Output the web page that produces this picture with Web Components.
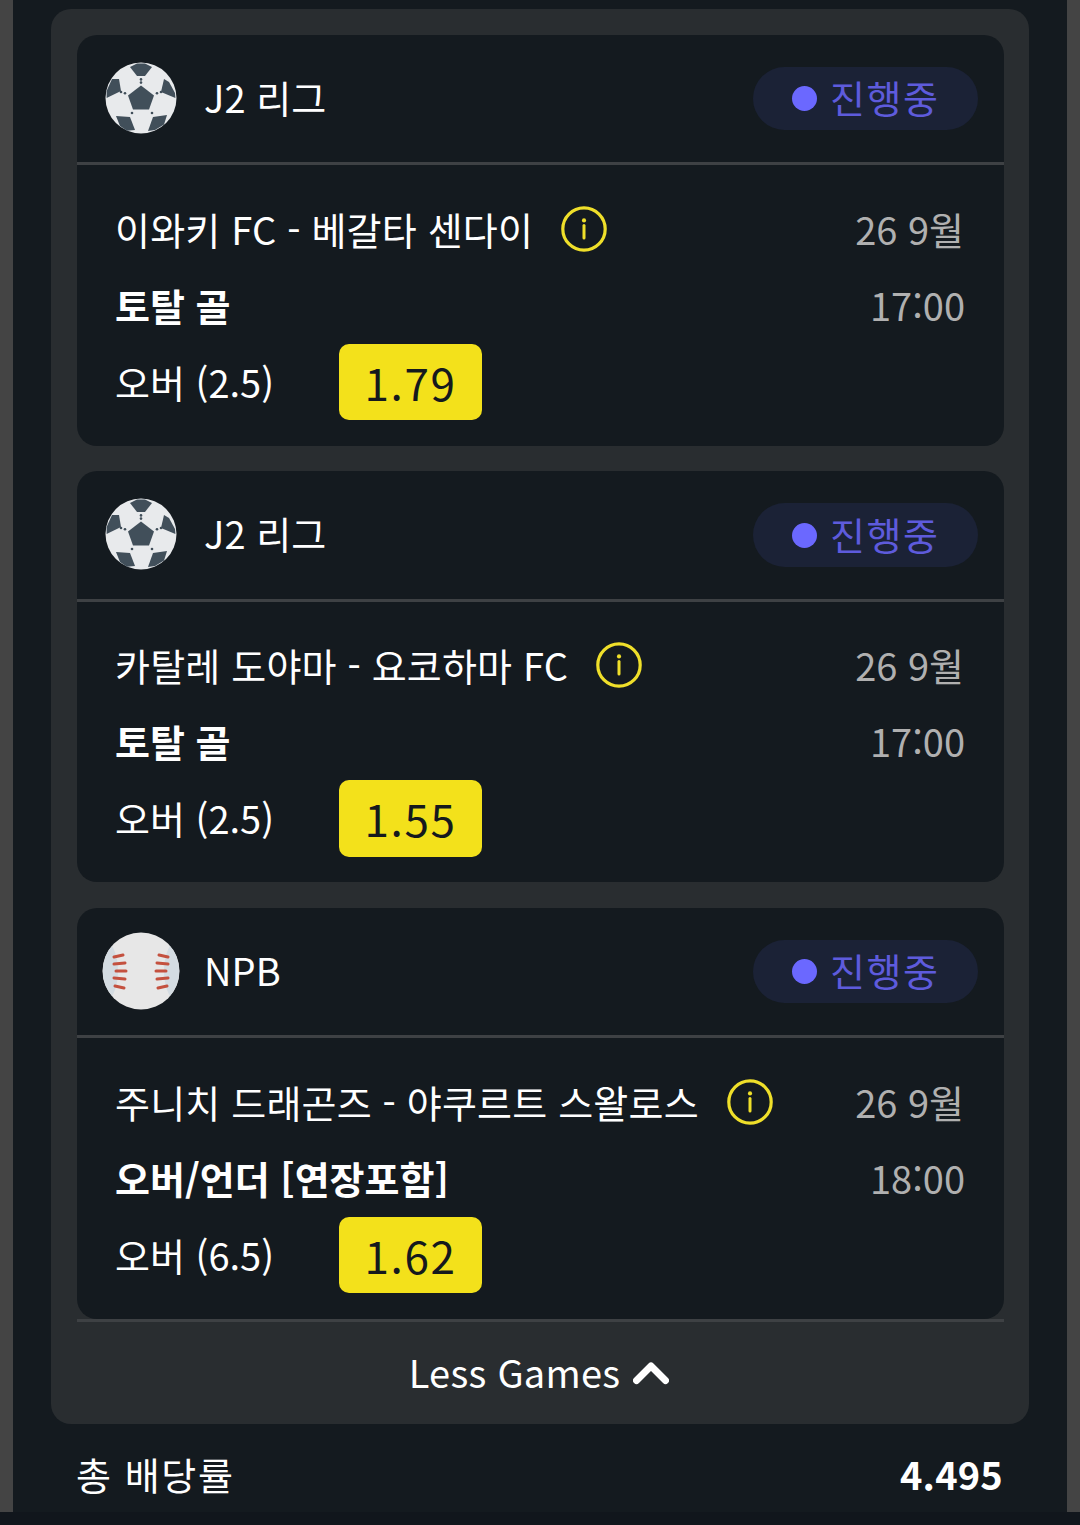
<!DOCTYPE html>
<html lang="ko"><head><meta charset="utf-8"><title>bets</title>
<style>
html,body{margin:0;padding:0;background:#11161c}
body{width:1080px;height:1525px;overflow:hidden;font-family:"Noto Sans CJK KR","Noto Sans",sans-serif;color:#fff}
</style></head><body>
<bet-slip>
  <bet-game sport="soccer" league="J2 리그" match="이와키 FC - 베갈타 센다이" market="토탈 골" pick="오버 (2.5)" odd="1.79" time="17:00"></bet-game>
  <bet-game sport="soccer" league="J2 리그" match="카탈레 도야마 - 요코하마 FC" market="토탈 골" pick="오버 (2.5)" odd="1.55" time="17:00"></bet-game>
  <bet-game sport="baseball" league="NPB" match="주니치 드래곤즈 - 야쿠르트 스왈로스" market="오버/언더 [연장포함]" pick="오버 (6.5)" odd="1.62" time="18:00"></bet-game>
</bet-slip>
<script>
const SOCCER=`<svg width="72" height="72" viewBox="-36 -36 72 72"><circle r="35.5" fill="#e8eaec"/><g fill="#414f5a"><path d="M0-12.5 13-2.5 8 11.5H-8L-13-2.5Z"/><path d="M-11-31-4-34.6H4L11-31 4-22H-4Z"/><path d="M-29-19-22-19-20-7-34.4 0-34.4-7Z"/><path d="M23-19 28-16 34-5 34.4 0 20-6Z"/><path d="M-25 18-11 19-6 32-14 32.8-21 28Z"/><path d="M12 19 26 17 23 26.5 14 32 7 33Z"/><circle cy="-18.6" r="1.3"/><circle cy="-15.4" r="1.3"/><circle cx="-20" cy="-6" r="1.3"/><circle cx="-16" cy="-4.8" r="1.3"/><circle cx="20" cy="-6" r="1.3"/><circle cx="16" cy="-4.8" r="1.3"/><circle cx="-9" cy="15" r="1.3"/><circle cx="11" cy="15" r="1.3"/></g></svg>`;
const BASEBALL=`<svg width="78" height="78" viewBox="-39 -39 78 78"><circle r="38.5" fill="#e7e7e7"/><path d="M-29-25A38.5 38.5 0 0 0-29 25C-21 12-21-12-29-25ZM29-25A38.5 38.5 0 0 1 29 25C21 12 21-12 29-25Z" fill="#d4dce2"/><g stroke="#c4513f" stroke-width="3" stroke-linecap="round" fill="none"><path d="M-27-14-18-16M-27-7-16-8M-25 0-15 0M-27 7-16 8M-26 15-17 17"/><path d="M27-14 18-16M27-7 16-8M25 0 15 0M27 7 16 8M26 15 17 17"/></g></svg>`;
const INFO=`<svg width="46" height="46" viewBox="0 0 46 46"><circle cx="23" cy="23" r="21.2" fill="none" stroke="#efdf2a" stroke-width="3.2"/><path d="M23 19.5V32" stroke="#efdf2a" stroke-width="3" stroke-linecap="round"/><circle cx="23" cy="14.4" r="2.1" fill="#efdf2a"/></svg>`;

function def(name,css,html,init){
  const tpl=document.createElement('template');tpl.innerHTML=`<style>${css}</style>${html}`;
  customElements.define(name,class extends HTMLElement{
    constructor(){super();this.attachShadow({mode:'open'}).appendChild(tpl.content.cloneNode(true))}
    connectedCallback(){init&&init(this,this.shadowRoot)}
  });
}
def('live-badge',`:host{display:flex;align-items:center;width:225px;height:63px;box-sizing:border-box;padding-left:39px;gap:13px;border-radius:32px;background:#1b2236;color:#5e5bdc;font-size:38px}
i{width:25px;height:25px;border-radius:50%;background:#6b68ff;flex:none}
span{letter-spacing:1.5px;line-height:59px;padding-bottom:4px}`,`<i></i><span>진행중</span>`);
def('less-toggle',`:host{display:flex;align-items:center;justify-content:center;gap:14px;height:102px;margin:0 -26px;font-size:38px;color:#fff;box-sizing:border-box;padding:3px 3px 0 0}
span{letter-spacing:.25px;padding-bottom:6px}
svg{display:block;margin:-4px 0 0 -1px}`,`<span>Less Games</span><svg width="36" height="24" viewBox="0 0 36 24"><path d="M3.5 19.5 18 5 32.5 19.5" fill="none" stroke="#fff" stroke-width="7" stroke-linecap="round" stroke-linejoin="round"/></svg>`);
def('bet-game',`:host{display:block;height:411px;border-radius:20px;background:#141a1f;overflow:hidden}
.head{display:flex;align-items:center;height:127px;border-bottom:3px solid #3e4144;padding:0 26px 0 0;font-size:38px}
.ic{width:127px;flex:none;display:flex;justify-content:center;padding-bottom:2px}
.ic svg{display:block}
.lg{flex:1;line-height:1;padding-bottom:4px;letter-spacing:.05px}
.body{padding:26px 39px 0 39px;display:grid;grid-template-columns:1fr auto;grid-auto-rows:76.5px;align-items:center;font-size:38px}
.match{display:flex;align-items:center;gap:28px;white-space:nowrap}
.m{letter-spacing:.18px;padding-bottom:2px;margin-left:-1px}
.match svg{display:block;flex:none}
.date,.time,.market,.p{padding-bottom:2px}
.date,.time{text-align:right;color:#b0b0b0}
.date{margin-right:1px}
.market{font-weight:700;margin-left:-1px}
.pick{display:flex;align-items:center}
.p{width:223px;flex:none;text-indent:-1px}
.odd{width:143px;height:76px;border-radius:10px;background:#f3e11b;color:#15191d;display:flex;align-items:center;justify-content:center;font-size:44px;line-height:1;letter-spacing:1.6px}
:host(:nth-child(2)) .head{height:128px}
:host(:nth-child(2)) .body{padding-top:25px}
:host(:nth-child(2)) live-badge{height:64px}
:host(:nth-child(2)) .odd{height:77px}`,
`<div class="head"><div class="ic"></div><div class="lg"></div><live-badge></live-badge></div>
<div class="body"><div class="match"><span class="m"></span></div><div class="date">26 9월</div><div class="market"></div><div class="time"></div><div class="pick"><span class="p"></span><div class="odd"></div></div></div>`,
(el,r)=>{const a=n=>el.getAttribute(n);const q=s=>r.querySelector(s);
 if(q('.ic').firstChild)return;
 q('.ic').innerHTML=a('sport')=='soccer'?SOCCER:BASEBALL;q('.lg').textContent=a('league');q('.m').textContent=a('match');q('.match').insertAdjacentHTML('beforeend',INFO);q('.market').textContent=a('market');q('.time').textContent=a('time');q('.p').textContent=a('pick');q('.odd').textContent=a('odd');});
def('bet-slip',`:host{display:block;height:1512px;box-sizing:border-box;border:solid #444;border-width:0 13px;background:#141a1f;padding-top:9px;font-size:38px}
.panel{margin:0 38px;background:#292d30;border-radius:20px;padding:26px 25px 0 26px;height:1415px;box-sizing:border-box}
.list{display:flex;flex-direction:column;gap:25px;border-bottom:3px solid #3e4144}
::slotted(:last-child){margin-top:1px}
.total{display:flex;justify-content:space-between;align-items:center;height:88px;padding:10px 64px 0 64px;box-sizing:border-box}
.total span{letter-spacing:1.6px;margin-left:-1px}
.total b{font-weight:700;letter-spacing:.2px}`,
`<div class="panel"><div class="list"><slot></slot></div><less-toggle></less-toggle></div><div class="total"><span>총 배당률</span><b>4.495</b></div>`);
</script></body></html>
